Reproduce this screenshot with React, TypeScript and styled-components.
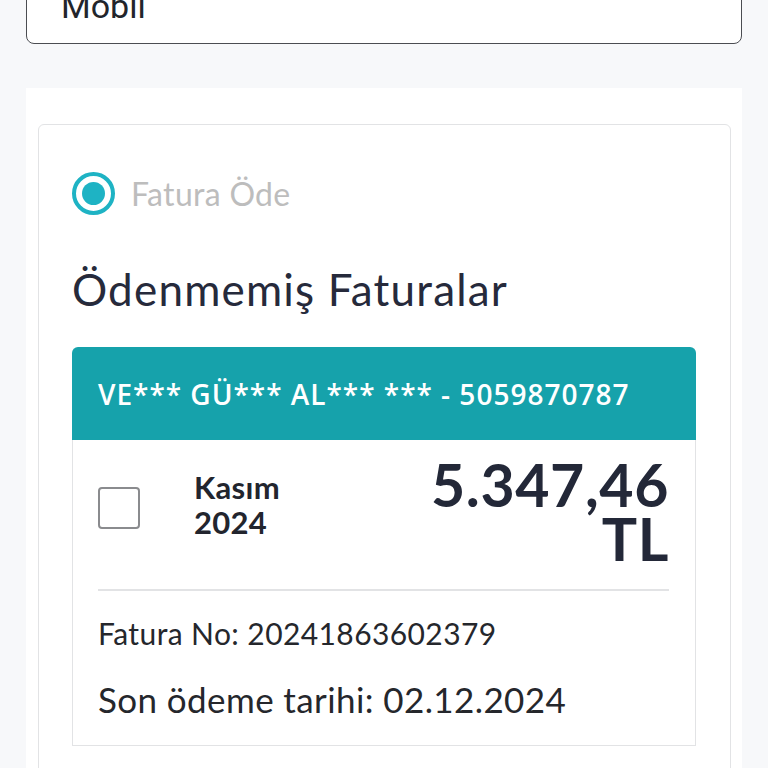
import React from "react";
import styled, { createGlobalStyle } from "styled-components";

const Global = createGlobalStyle`
  html, body { margin: 0; padding: 0; background: #f7f8fa; }
  body { font-family: "Lato", "Noto Sans", sans-serif; overflow: hidden; }
`;

const Page = styled.div`
  padding: 0 26px;
  margin-top: -32px;
`;

const InputBox = styled.div`
  height: 76px;
  box-sizing: border-box;
  background: #fff;
  border: 1.5px solid #4b4d52;
  border-radius: 8px;
  display: flex;
  align-items: center;
  padding: 0 34px;
  font-family: "Roboto", sans-serif;
  font-size: 34px;
  color: #22252b;
`;

const Panel = styled.div`
  margin-top: 44px;
  background: #fff;
  padding: 36px 11px 0 12px;
  min-height: 800px;
`;

const Card = styled.div`
  border: 1px solid #e2e3e5;
  border-radius: 6px;
  padding: 47px 34px 40px 33px;
`;

const RadioRow = styled.label`
  display: flex;
  align-items: center;
  gap: 16px;
`;

const Radio = styled.span`
  width: 43px;
  height: 43px;
  box-sizing: border-box;
  border-radius: 50%;
  border: 4px solid #1eb3c4;
  display: flex;
  align-items: center;
  justify-content: center;
  &::after {
    content: "";
    width: 23px;
    height: 23px;
    border-radius: 50%;
    background: #1eb3c4;
  }
`;

const RadioLabel = styled.span`
  font-size: 32px;
  color: #bdbdbd;
  letter-spacing: 0.3px;
`;

const Title = styled.h2`
  margin: 49px 0 0;
  font-size: 44px;
  font-weight: 400;
  color: #262a3b;
  line-height: 50px;
  letter-spacing: 1.2px;
`;

const Bill = styled.div`
  margin-top: 33px;
  border-radius: 6px 6px 0 0;
  overflow: hidden;
`;

const BillHeader = styled.div`
  background: #16a2ab;
  height: 93px;
  display: flex;
  align-items: center;
  padding: 0 26px;
  color: #fff;
  font-family: "Open Sans", sans-serif;
  font-weight: 600;
  font-size: 28px;
  letter-spacing: 1px;
`;

const BillBody = styled.div`
  border: 1px solid #e2e3e5;
  border-top: none;
  padding: 18px 26px 26px 25px;
`;

const TopRow = styled.div`
  display: flex;
  align-items: flex-start;
  padding-bottom: 23px;
  border-bottom: 2px solid #e2e3e5;
`;

const CheckBox = styled.span`
  width: 42px;
  height: 42px;
  box-sizing: border-box;
  border: 2px solid #8a8b8e;
  border-radius: 4px;
  margin-top: 29px;
  flex-shrink: 0;
`;

const Period = styled.div`
  margin-left: 54px;
  margin-top: 12px;
  font-size: 31px;
  font-weight: 700;
  color: #22252e;
  line-height: 35px;
  letter-spacing: 0.3px;
`;

const Amount = styled.div`
  margin-left: auto;
  text-align: right;
  font-size: 59px;
  font-weight: 700;
  color: #232838;
  line-height: 54px;
  letter-spacing: 0.6px;
`;

const InfoLine = styled.div<{ $size: number; $lh: number; $mt: number }>`
  margin-top: ${(p) => p.$mt}px;
  font-size: ${(p) => p.$size}px;
  line-height: ${(p) => p.$lh}px;
  color: #25272c;
  letter-spacing: 0.4px;
`;

export default function App() {
  return (
    <>
      <Global />
      <Page>
        <InputBox>Mobil</InputBox>
        <Panel>
          <Card>
            <RadioRow>
              <Radio />
              <RadioLabel>Fatura Öde</RadioLabel>
            </RadioRow>
            <Title>Ödenmemiş Faturalar</Title>
            <Bill>
              <BillHeader>VE*** GÜ*** AL*** *** - 5059870787</BillHeader>
              <BillBody>
                <TopRow>
                  <CheckBox />
                  <Period>
                    Kasım
                    <br />
                    2024
                  </Period>
                  <Amount>
                    5.347,46
                    <br />
                    TL
                  </Amount>
                </TopRow>
                <InfoLine $size={30} $lh={36} $mt={24}>Fatura No: 20241863602379</InfoLine>
                <InfoLine $size={35} $lh={40} $mt={28}>Son ödeme tarihi: 02.12.2024</InfoLine>
              </BillBody>
            </Bill>
          </Card>
        </Panel>
      </Page>
    </>
  );
}
